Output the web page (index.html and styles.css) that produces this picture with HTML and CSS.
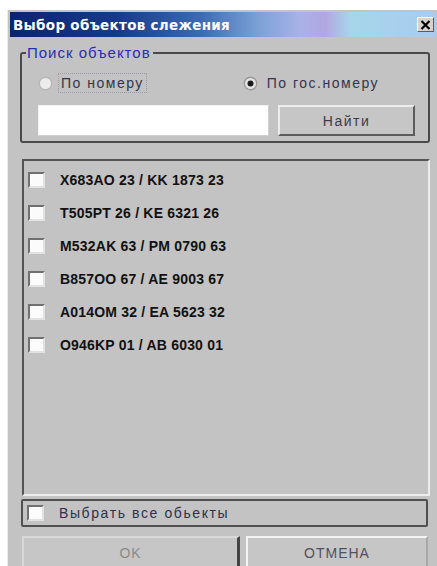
FILE: index.html
```html
<!DOCTYPE html>
<html lang="ru">
<head>
<meta charset="utf-8">
<title>Выбор объектов слежения</title>
<link rel="stylesheet" href="styles.css">
</head>
<body>
<div class="window">
  <div class="titlebar">
    <span class="title">Выбор объектов слежения</span>
    <button class="close" type="button" aria-label="Закрыть">
      <svg width="11" height="10" viewBox="0 0 11 10"><path d="M1.5 1 L9.5 9 M9.5 1 L1.5 9" stroke="#000" stroke-width="2.2" fill="none"/></svg>
    </button>
  </div>
  <div class="content">
    <fieldset class="search">
      <legend>Поиск объектов</legend>
      <div class="radios">
        <label class="radio first">
          <svg class="dot" width="15" height="15" viewBox="0 0 15 15"><circle cx="7.5" cy="7.5" r="6.2" fill="#ececec" stroke="#b8b8b8" stroke-width="1.4"/></svg>
          <span class="focus">По номеру</span>
        </label>
        <label class="radio second">
          <svg class="dot" width="15" height="15" viewBox="0 0 15 15"><circle cx="7.5" cy="7.5" r="6.2" fill="#e4e4e4" stroke="#9a9a9a" stroke-width="1.4"/><circle cx="7.5" cy="7.5" r="3" fill="#1a1a1a"/></svg>
          <span>По гос.номеру</span>
        </label>
      </div>
      <div class="search-row">
        <input class="field" type="text">
        <button class="btn find" type="button">Найти</button>
      </div>
    </fieldset>

    <div class="list">
      <label class="item"><span class="check"></span><span class="plate">X683AO 23 / KK 1873 23</span></label>
      <label class="item"><span class="check"></span><span class="plate">T505PT 26 / KE 6321 26</span></label>
      <label class="item"><span class="check"></span><span class="plate">M532AK 63 / PM 0790 63</span></label>
      <label class="item"><span class="check"></span><span class="plate">B857OO 67 / AE 9003 67</span></label>
      <label class="item"><span class="check"></span><span class="plate">A014OM 32 / EA 5623 32</span></label>
      <label class="item"><span class="check"></span><span class="plate">O946KP 01 / AB 6030 01</span></label>
    </div>

    <label class="select-all"><span class="check"></span><span class="all-text">Выбрать все обьекты</span></label>

    <div class="actions">
      <button class="btn ok" type="button">OK</button>
      <button class="btn cancel" type="button">ОТМЕНА</button>
    </div>
  </div>
</div>
</body>
</html>
```
FILE: styles.css
```css
html, body {
  margin: 0;
  padding: 0;
  background: #ffffff;
}

body {
  width: 437px;
  height: 566px;
  overflow: hidden;
  font-family: "Liberation Sans", Arial, sans-serif;
}

.window {
  margin: 10px 0 0 7px;
  width: 430px;
  height: 570px;
  box-sizing: border-box;
  background: #c3c3c3;
  border-left: 1px solid #ececec;
  padding: 2px 0 0 2px;
  display: flex;
  flex-direction: column;
}

/* caption bar */
.titlebar {
  height: 25px;
  margin-right: 1px;
  display: flex;
  align-items: center;
  justify-content: space-between;
  background: linear-gradient(to right,
    #0a2470 0%, #17398a 25%, #3d6bb3 45%, #7aa0d6 58%,
    #a9b2e6 68%, #b3a6e2 74%, #a6d6ea 80%, #a9cbef 100%);
}

.title {
  padding-left: 3px;
  color: #ffffff;
  font-family: "DejaVu Sans", Verdana, sans-serif;
  font-weight: bold;
  font-size: 13.5px;
  letter-spacing: 0.3px;
}

.close {
  width: 17px;
  height: 15px;
  margin-right: 2px;
  padding: 0;
  display: flex;
  align-items: center;
  justify-content: center;
  background: #d6d3cc;
  border: 1px solid;
  border-color: #ffffff #5a5a5a #5a5a5a #ffffff;
}

.content {
  display: flex;
  flex-direction: column;
}

/* search group */
.search {
  margin: 8px 7px 0 10px;
  padding: 0 0 5px 0;
  border: 2px solid #4a4a4a;
  border-radius: 3px;
  min-width: 0;
}

.search legend {
  margin-left: 4px;
  padding: 0 2px 0 1px;
  line-height: 16px;
  font-size: 15px;
  color: #2b2bb8;
  letter-spacing: 1px;
}

.radios {
  display: flex;
  margin: 11px 0 0 16px;
  height: 22px;
  align-items: center;
}

.radio {
  display: flex;
  align-items: center;
  gap: 7px;
  font-size: 14px;
  letter-spacing: 1.5px;
  color: #34344c;
}

.radio.second {
  margin-left: 98px;
  gap: 9px;
}

.focus {
  outline: 1px dotted #9c9ca8;
  outline-offset: 1px;
  padding: 0 1px;
}

.search-row {
  display: flex;
  margin: 11px 0 0 16px;
  height: 31px;
}

.field {
  width: 231px;
  height: 31px;
  box-sizing: border-box;
  margin: 0;
  background: #ffffff;
  border: 1px solid;
  border-color: #f2f2f2 #cfcfcf #cfcfcf #f2f2f2;
}

.btn {
  margin: 0;
  padding: 0;
  font-family: "Liberation Sans", Arial, sans-serif;
  background: #c6c6c6;
  border: 2px solid;
  border-color: #ececec #5c5c5c #5c5c5c #ececec;
}

.find {
  width: 137px;
  margin-left: 9px;
  font-size: 14px;
  letter-spacing: 1.5px;
  color: #3c3c4a;
}

/* plate list */
.list {
  margin: 16px 7px 0 12px;
  height: 337px;
  box-sizing: border-box;
  border: 2px solid;
  border-color: #555555 #ededed #ededed #555555;
  padding: 10px 0 0 4px;
  display: flex;
  flex-direction: column;
  gap: 16px;
}

.item {
  display: flex;
  align-items: center;
  height: 17px;
}

.check {
  width: 17px;
  height: 16px;
  box-sizing: border-box;
  flex: none;
  background: #fbfbfb;
  border: 2px solid;
  border-color: #707070 #e2e2e2 #e2e2e2 #707070;
}

.plate {
  margin-left: 15px;
  font-size: 14px;
  font-weight: bold;
  color: #111111;
  letter-spacing: 0.2px;
}

/* select all */
.select-all {
  margin: 3px 9px 0 11px;
  height: 28px;
  box-sizing: border-box;
  border: 2px solid #505050;
  border-radius: 2px;
  padding-left: 4px;
  display: flex;
  align-items: center;
}

.all-text {
  margin-left: 15px;
  font-size: 14px;
  letter-spacing: 1.6px;
  color: #30304a;
}

/* dialog buttons */
.actions {
  display: flex;
  margin: 9px 9px 0 12px;
  height: 34px;
}

.ok {
  width: 218px;
  font-size: 14px;
  color: #8a8a8a;
  letter-spacing: 1px;
  border-color: #d8d8d8 #444444 #c6c6c6 #d8d8d8;
  border-right-width: 3px;
}

.cancel {
  margin-left: 6px;
  flex: 1;
  font-size: 14px;
  letter-spacing: 1px;
  color: #505060;
  border-color: #f4f4f4 #a8a8a8 #c6c6c6 #f4f4f4;
}
```
